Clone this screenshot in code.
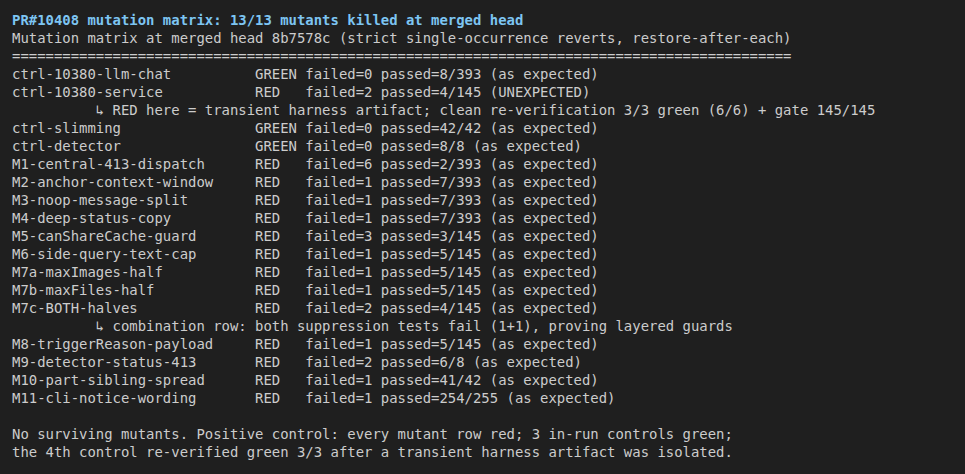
const rows: [string, string, string, string][] = [
  ["ctrl-10380-llm-chat", "GREEN", "failed=0 passed=8/393", "(as expected)"],
  ["ctrl-10380-service", "RED", "failed=2 passed=4/145", "(UNEXPECTED)"],
  ["", "", "", ""],
  ["ctrl-slimming", "GREEN", "failed=0 passed=42/42", "(as expected)"],
  ["ctrl-detector", "GREEN", "failed=0 passed=8/8", "(as expected)"],
  ["M1-central-413-dispatch", "RED", "failed=6 passed=2/393", "(as expected)"],
  ["M2-anchor-context-window", "RED", "failed=1 passed=7/393", "(as expected)"],
  ["M3-noop-message-split", "RED", "failed=1 passed=7/393", "(as expected)"],
  ["M4-deep-status-copy", "RED", "failed=1 passed=7/393", "(as expected)"],
  ["M5-canShareCache-guard", "RED", "failed=3 passed=3/145", "(as expected)"],
  ["M6-side-query-text-cap", "RED", "failed=1 passed=5/145", "(as expected)"],
  ["M7a-maxImages-half", "RED", "failed=1 passed=5/145", "(as expected)"],
  ["M7b-maxFiles-half", "RED", "failed=1 passed=5/145", "(as expected)"],
  ["M7c-BOTH-halves", "RED", "failed=2 passed=4/145", "(as expected)"],
  ["", "", "", ""],
  ["M8-triggerReason-payload", "RED", "failed=1 passed=5/145", "(as expected)"],
  ["M9-detector-status-413", "RED", "failed=2 passed=6/8", "(as expected)"],
  ["M10-part-sibling-spread", "RED", "failed=1 passed=41/42", "(as expected)"],
  ["M11-cli-notice-wording", "RED", "failed=1 passed=254/255", "(as expected)"],
];

const notes = [
  "          ↳ RED here = transient harness artifact; clean re-verification 3/3 green (6/6) + gate 145/145",
  "          ↳ combination row: both suppression tests fail (1+1), proving layered guards",
];

export default function App() {
  let noteIdx = 0;
  const lines = rows.map(([name, verdict, counts, tail]) => {
    if (!name) return notes[noteIdx++];
    return `${name.padEnd(28)} ${verdict.padEnd(5)} ${counts} ${tail}`;
  });

  return (
    <div
      className="w-[965px] h-[474px] overflow-hidden bg-[#1f1f1f] text-[#cccccc] pt-[11px] pl-[12px] text-[13.93px] leading-[18px] whitespace-pre"
      style={{ fontFamily: '"DejaVu Sans Mono", "Liberation Mono", monospace' }}
    >
      <div className="font-bold text-[#7dc5f2]">PR#10408 mutation matrix: 13/13 mutants killed at merged head</div>
      <div>Mutation matrix at merged head 8b7578c (strict single-occurrence reverts, restore-after-each)</div>
      <div>{"=".repeat(93)}</div>
      {lines.map((l, i) => (
        <div key={i}>{l}</div>
      ))}
      <div>{" "}</div>
      <div>No surviving mutants. Positive control: every mutant row red; 3 in-run controls green;</div>
      <div>the 4th control re-verified green 3/3 after a transient harness artifact was isolated.</div>
    </div>
  );
}
